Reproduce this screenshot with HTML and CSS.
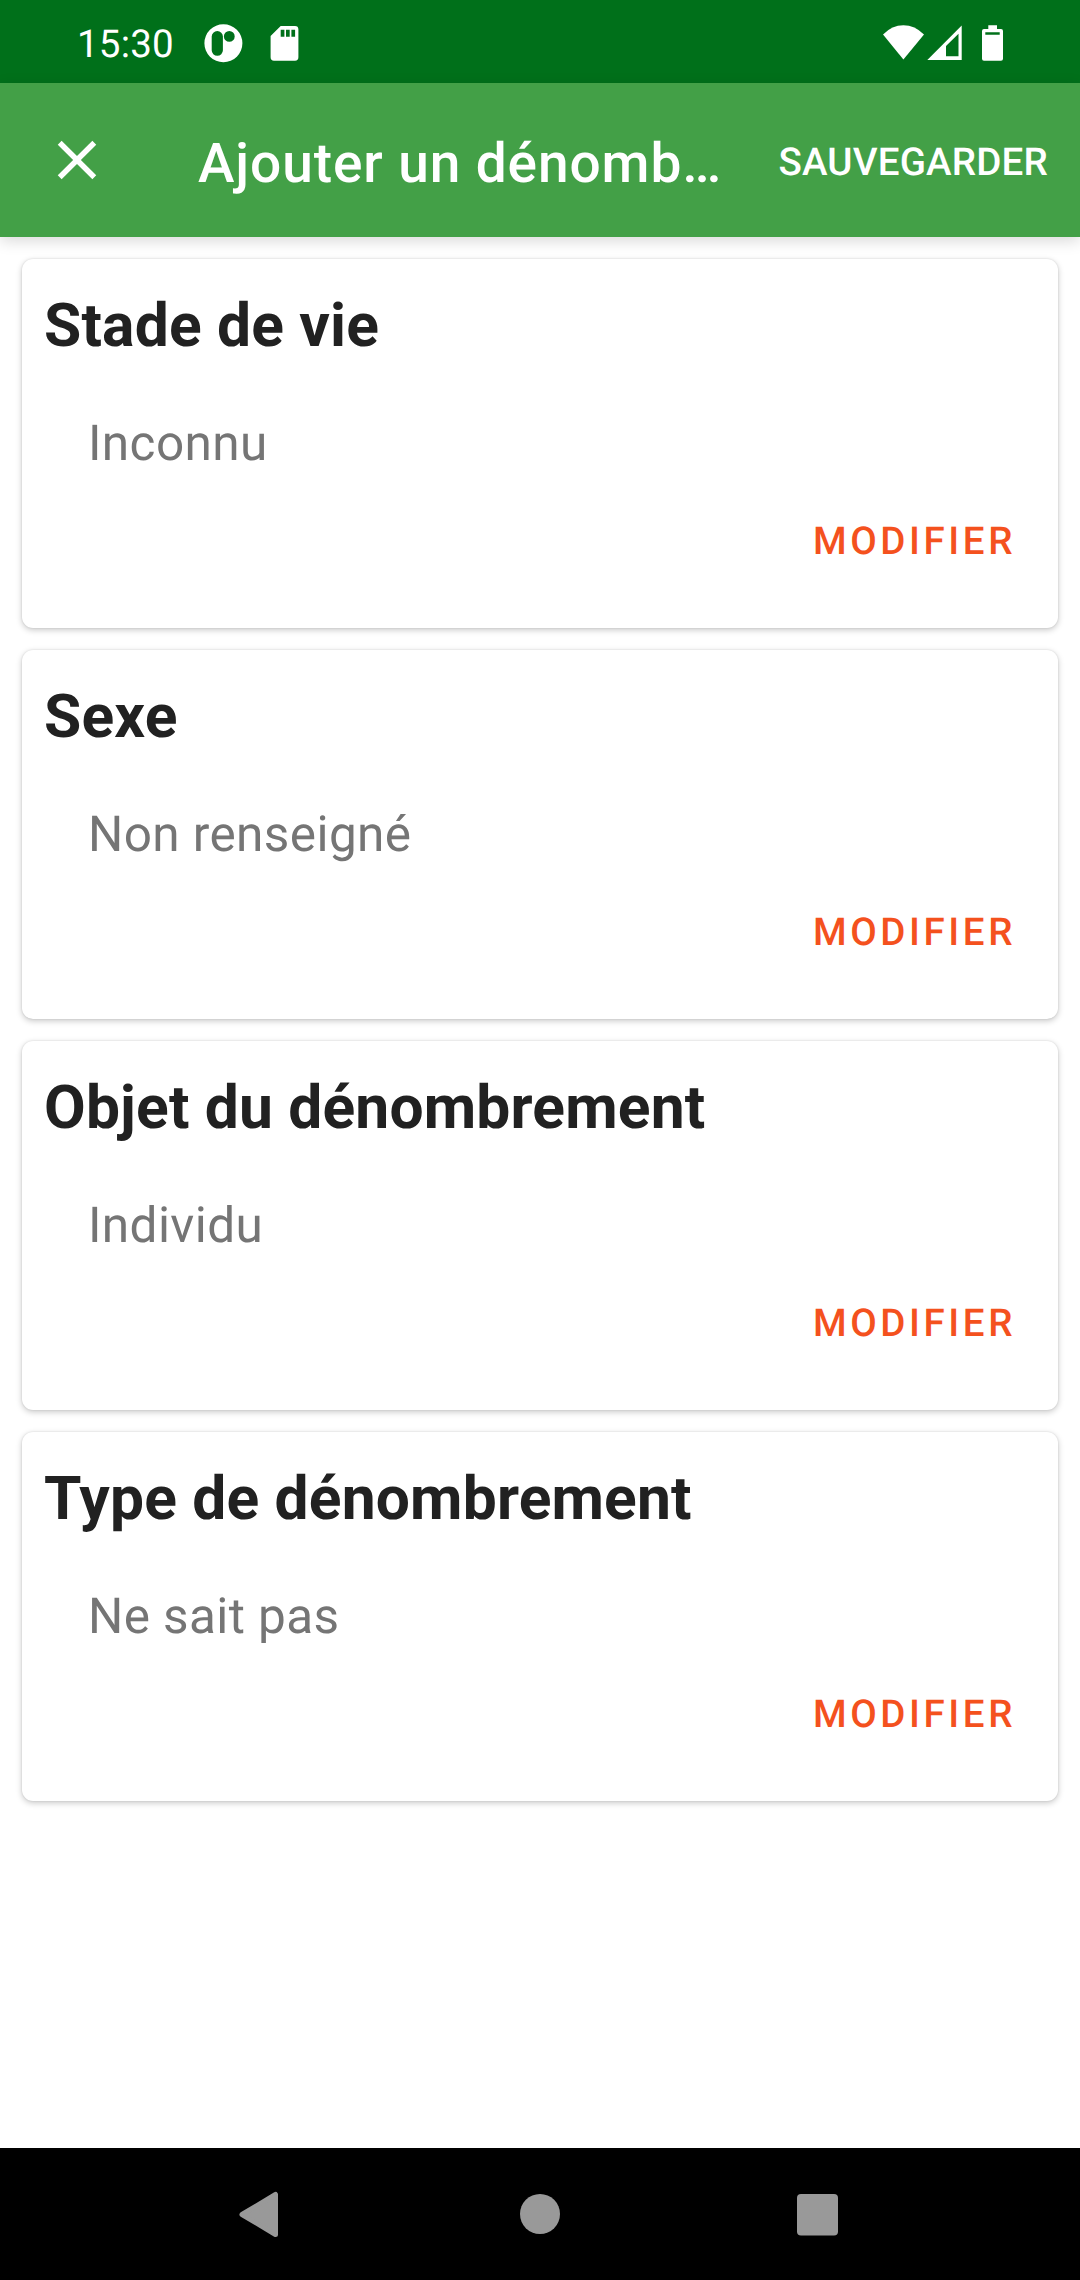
FILE: index.html
```html
<!DOCTYPE html>
<html lang="fr">
<head>
<meta charset="utf-8">
<title>Ajouter un dénombrement</title>
<link rel="stylesheet" href="styles.css">
</head>
<body>
<div class="screen">
  <header class="status-bar">
    <span class="clock">15:30</span>
    <svg class="notifications" width="100" height="40" viewBox="200 24 100 40" fill="#fff">
      <path fill-rule="evenodd" d="M223.4 24.3a19 19 0 1 1 0 38a19 19 0 1 1 0-38zM217.3 31a5.6 5.6 0 0 0-5.6 5.6v13.6a5.6 5.6 0 0 0 11.2 0V36.600a5.6 5.6 0 0 0-5.600-5.600zM229.300 31a5.400 5.400 0 1 0 0 10.800a5.400 5.400 0 1 0 0-10.800z"/>
      <path fill-rule="evenodd" d="M280.700 26H295a3.400 3.400 0 0 1 3.400 3.400V57.300a3.400 3.400 0 0 1-3.400 3.400H274a3.400 3.400 0 0 1-3.400-3.400V36zM280.700 29.800v7h3.700v-7zM286 29.800v7h3.700v-7zM291.400 29.800v7h3.700v-7z"/>
    </svg>
    <svg class="system-icons" width="122" height="40" viewBox="882 24 122 40" fill="#fff">
      <path d="M903.400 59.400L883 34.500Q892 25.300 903.400 25.300T924 34.500z"/>
      <path fill-rule="evenodd" d="M927.300 60L961.700 25.500V60zM946 46V56.300H958.500V33.700z"/>
      <path fill-rule="evenodd" d="M988.300 25.300h8.700V29h4a2 2 0 0 1 2 2v27.700a2 2 0 0 1-2 2H984a2 2 0 0 1-2-2V31a2 2 0 0 1 2-2h4.300zM985.300 32.300v2.400h14.400v-2.400z"/>
    </svg>
  </header>
  <div class="app-bar">
    <svg class="close" viewBox="0 0 24 24" fill="#fff"><path d="M19 6.410L17.590 5 12 10.590 6.410 5 5 6.410 10.590 12 5 17.590 6.410 19 12 13.410 17.590 19 19 17.590 13.410 12z"/></svg>
    <h1 class="title">Ajouter un dénomb…</h1>
    <span class="save">SAUVEGARDER</span>
  </div>
  <main class="cards">
    <section class="card">
      <h2 class="card-title">Stade de vie</h2>
      <p class="card-value">Inconnu</p>
      <span class="card-action">MODIFIER</span>
    </section>
    <section class="card">
      <h2 class="card-title">Sexe</h2>
      <p class="card-value">Non renseigné</p>
      <span class="card-action">MODIFIER</span>
    </section>
    <section class="card">
      <h2 class="card-title">Objet du dénombrement</h2>
      <p class="card-value">Individu</p>
      <span class="card-action">MODIFIER</span>
    </section>
    <section class="card">
      <h2 class="card-title">Type de dénombrement</h2>
      <p class="card-value">Ne sait pas</p>
      <span class="card-action">MODIFIER</span>
    </section>
  </main>
  <nav class="nav-bar">
    <svg width="40" height="46" viewBox="0 0 40 46"><path d="M3 23.500L36.500 3.500V43.500z" fill="#999" stroke="#999" stroke-width="5" stroke-linejoin="round"/></svg>
    <svg width="40" height="40" viewBox="0 0 40 40"><circle cx="20" cy="20" r="20" fill="#999"/></svg>
    <svg width="41" height="44" viewBox="0 0 41 44"><rect y="2" width="41" height="41.500" rx="4" fill="#999"/></svg>
  </nav>
</div>
</body>
</html>
```
FILE: styles.css
```css
body {
  margin: 0;
  background: #fff;
  font-family: Roboto, sans-serif;
  text-rendering: geometricPrecision;
}

h1, h2, p {
  margin: 0;
}

svg {
  display: block;
  flex: none;
}

.screen {
  display: flex;
  flex-direction: column;
  width: 1080px;
  height: 2280px;
  overflow: hidden;
}

.status-bar {
  display: flex;
  box-sizing: border-box;
  height: 83px;
  padding: 24px 76px 0 77px;
  background: #00701a;
  color: #fff;
}

.clock {
  width: 123px;
  font-size: 38.5px;
  letter-spacing: 0.2px;
  line-height: 42px;
}

.system-icons {
  margin-left: auto;
}

.app-bar {
  display: flex;
  align-items: center;
  box-sizing: border-box;
  height: 154px;
  padding: 0 32px 0 44px;
  background: #43a047;
  color: #fff;
  box-shadow: 0 4px 14px rgba(0, 0, 0, 0.15);
}

.close {
  width: 66px;
  height: 66px;
}

.title {
  margin-left: 88px;
  padding-top: 7px;
  font-size: 55px;
  font-weight: 500;
  letter-spacing: 0.9px;
  line-height: 64px;
  white-space: nowrap;
}

.save {
  margin-left: auto;
  padding-top: 5px;
  font-size: 38.5px;
  font-weight: 500;
  letter-spacing: 0.2px;
  line-height: 46px;
}

.cards {
  display: flex;
  flex: 1;
  flex-direction: column;
  gap: 22px;
  padding: 22px;
}

.card {
  display: flex;
  flex-direction: column;
  box-sizing: border-box;
  height: 369px;
  padding: 31px 42px 0 22px;
  border-radius: 11px;
  background: #fff;
  box-shadow: 0 2px 6px rgba(0, 0, 0, 0.22), 0 0 2px rgba(0, 0, 0, 0.12);
}

.card-title {
  color: #212121;
  font-size: 60.5px;
  font-weight: 700;
  letter-spacing: 0.18px;
  line-height: 72px;
}

.card-value {
  margin: 53px 0 0 44px;
  color: #757575;
  font-size: 49.5px;
  letter-spacing: 0.4px;
  line-height: 58px;
}

.card-action {
  align-self: flex-end;
  margin-top: 46px;
  color: #f4511e;
  font-size: 38.5px;
  font-weight: 500;
  letter-spacing: 3.6px;
  line-height: 46px;
}

.nav-bar {
  display: grid;
  grid-template-columns: 281px 277px 41px;
  align-items: center;
  box-sizing: border-box;
  height: 132px;
  padding-left: 239px;
  background: #000;
}
```
